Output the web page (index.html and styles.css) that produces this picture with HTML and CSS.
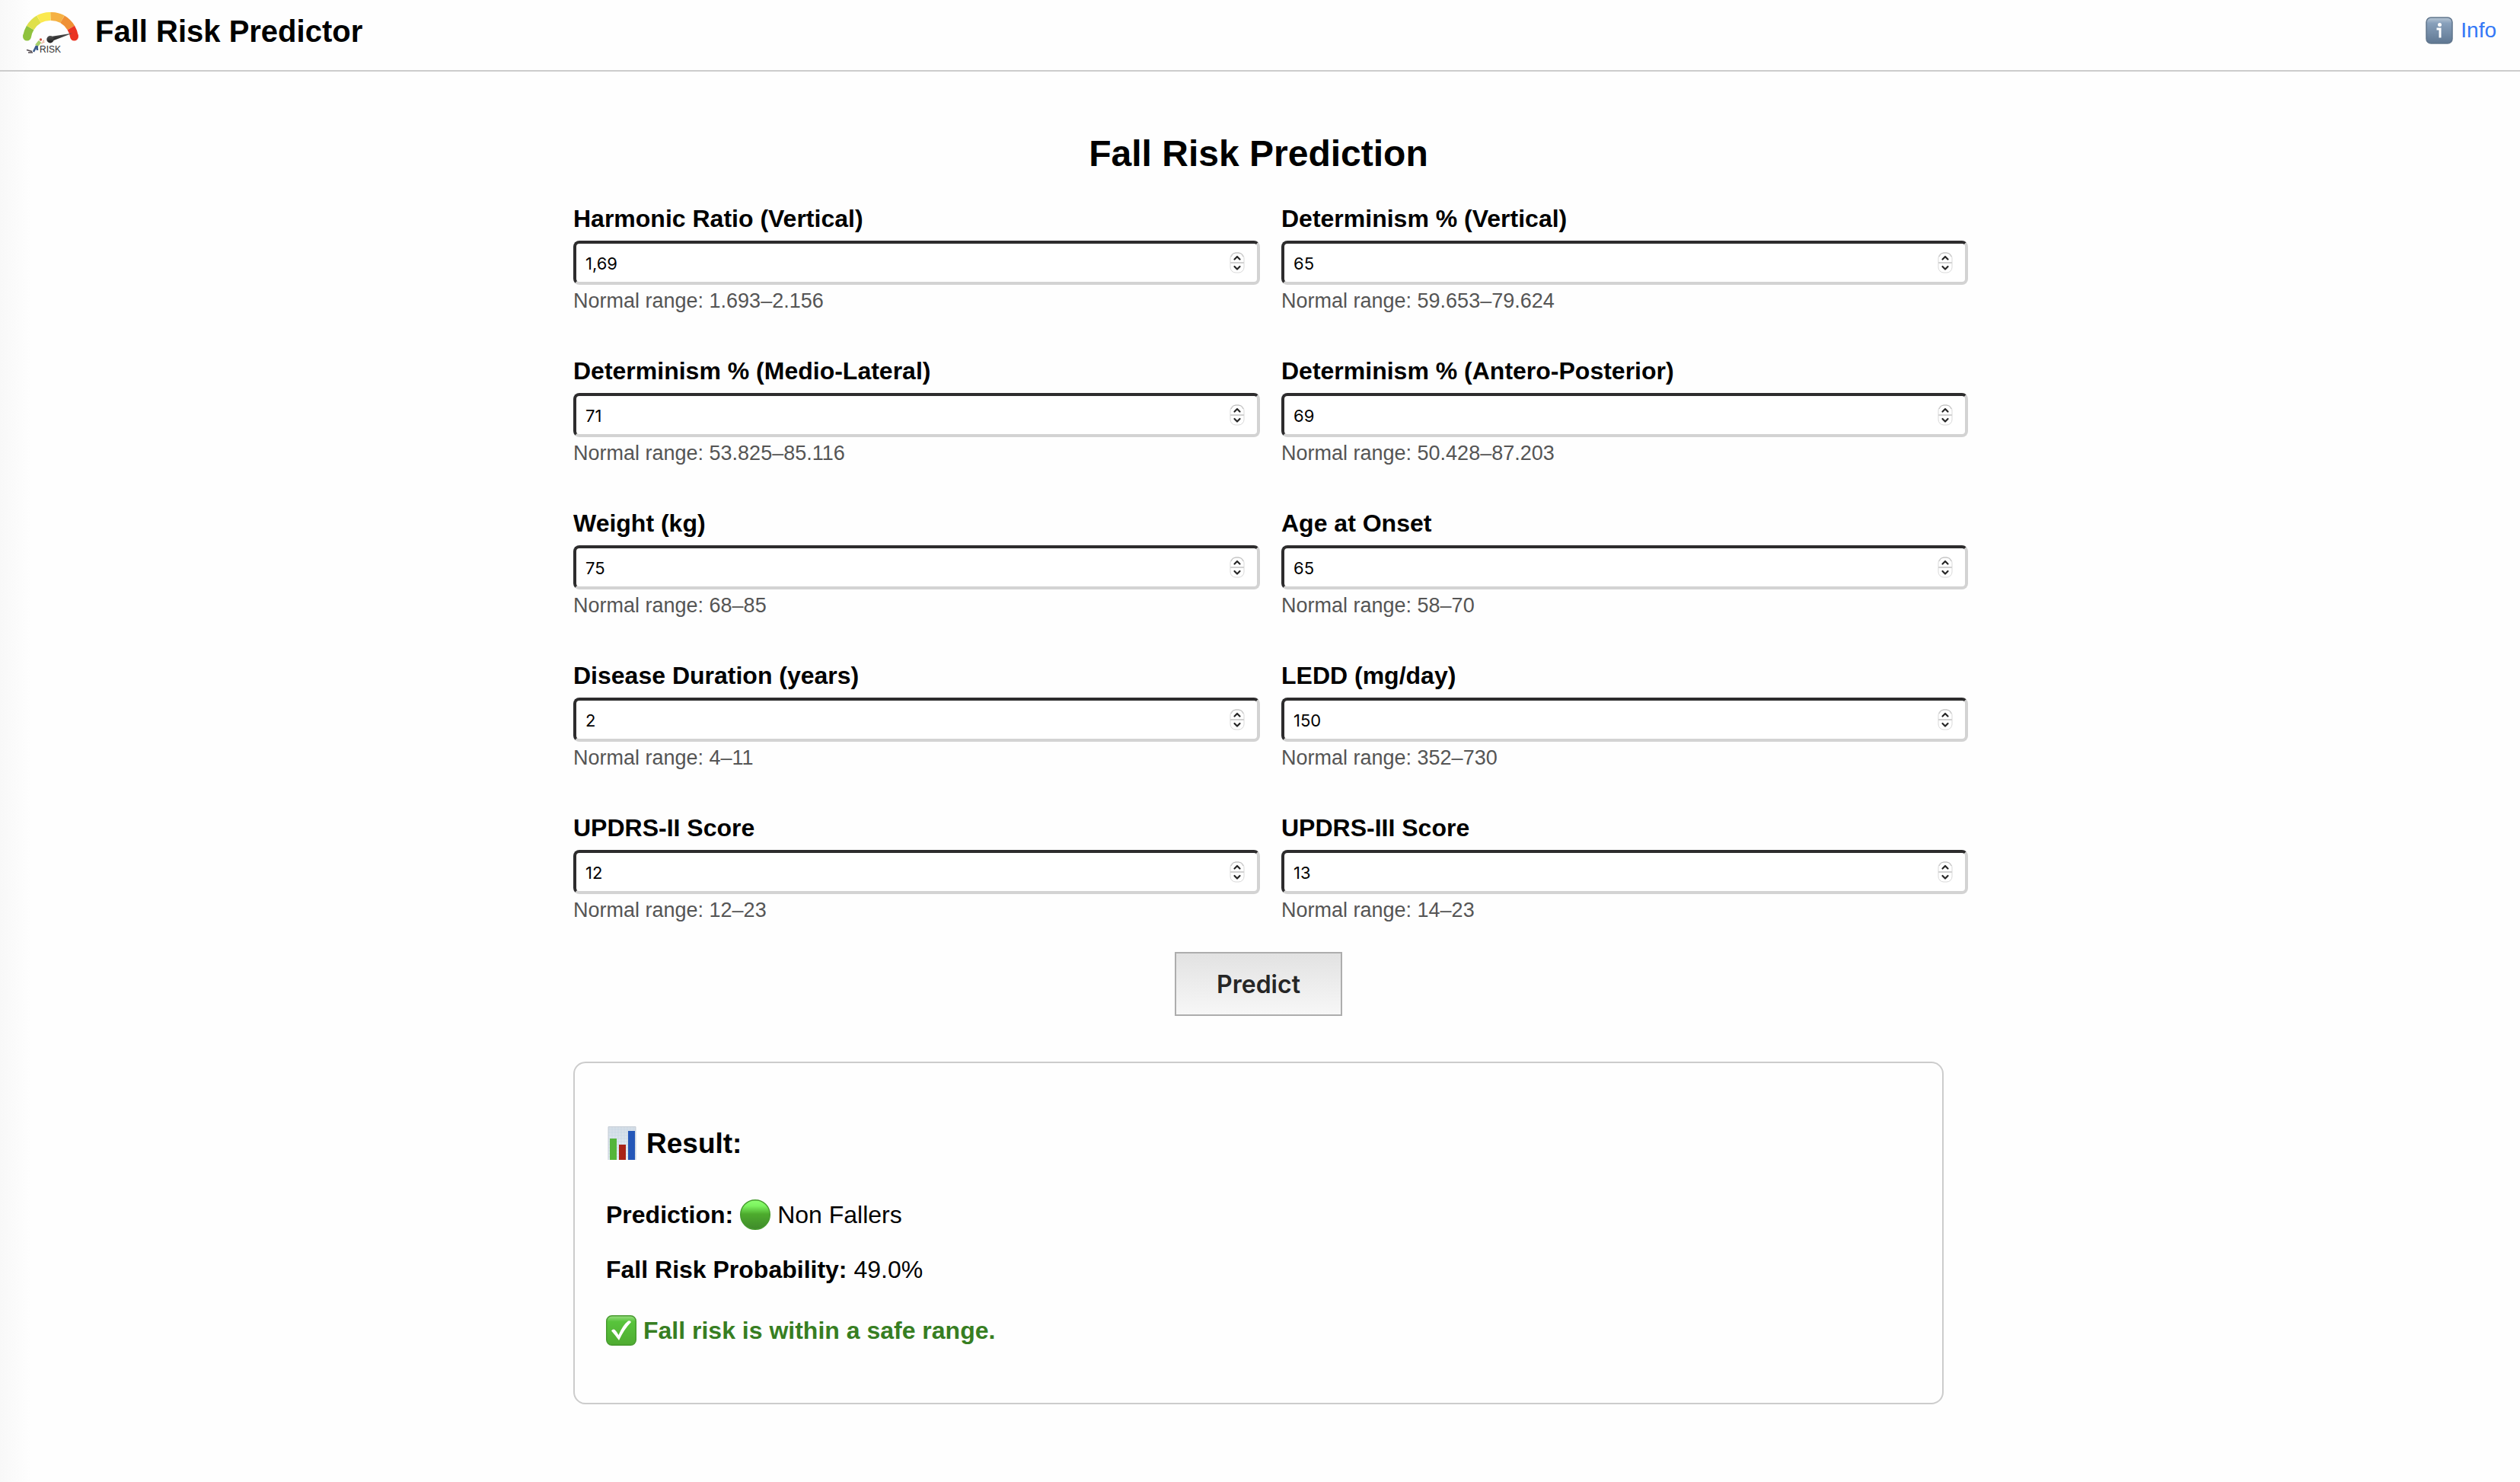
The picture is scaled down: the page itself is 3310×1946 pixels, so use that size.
FILE: index.html
```html
<!DOCTYPE html>
<html lang="en">
<head>
<meta charset="utf-8">
<meta name="viewport" content="width=device-width, initial-scale=1">
<title>Fall Risk Predictor</title>
<link rel="stylesheet" href="styles.css">
</head>
<body>
<svg class="defs" width="0" height="0" aria-hidden="true">
  <defs>
    <linearGradient id="needle" x1="0" y1="0" x2="0" y2="1"><stop offset="0" stop-color="#555"/><stop offset="1" stop-color="#1c1c1c"/></linearGradient>
    <linearGradient id="steel" x1="0" y1="0" x2="0" y2="1"><stop offset="0" stop-color="#b9c8d6"/><stop offset=".22" stop-color="#88a0bb"/><stop offset="1" stop-color="#5f7792"/></linearGradient>
    <linearGradient id="paper" x1="0" y1="0" x2="0" y2="1"><stop offset="0" stop-color="#d5dde6"/><stop offset="1" stop-color="#e9f1f9"/></linearGradient>
    <linearGradient id="ball" x1="0" y1="0" x2="0" y2="1"><stop offset="0" stop-color="#8dff70"/><stop offset=".2" stop-color="#7cf35f"/><stop offset=".48" stop-color="#4dab2d"/><stop offset="1" stop-color="#3f8a2b"/></linearGradient>
    <linearGradient id="tick" x1="0" y1="0" x2="0" y2="1"><stop offset="0" stop-color="#9ade82"/><stop offset=".2" stop-color="#58c43c"/><stop offset="1" stop-color="#4fab31"/></linearGradient>
    <symbol id="spin" viewBox="0 0 20 28">
      <rect x="1" y="1" width="18" height="26" rx="7" fill="#fff" stroke="#d9d9d9" stroke-width="1"/>
      <path d="M2 6Q4 1 8 1H12Q16 1 18 6" fill="none" stroke="#bbb"/>
      <path d="M1 14H19" stroke="#d2d2d2" stroke-width="2"/>
      <path d="M6.500 9.500L10 6L13.500 9.500M6.500 19L10 22.500L13.500 19" fill="none" stroke="#262626" stroke-width="2.200" stroke-linecap="round" stroke-linejoin="round"/>
    </symbol>
  </defs>
</svg>

<header class="topbar">
  <div class="brand">
    <svg class="brand-logo" viewBox="0 0 76 56" aria-hidden="true">
      <g fill="none" stroke-width="11">
        <path d="M6.500 32A31 31 0 0 1 10.700 20.500" stroke="#8fc23e"/>
        <path d="M10.700 20.500A31 31 0 0 1 22 9.200" stroke="#dfe04a"/>
        <path d="M22 9.200A31 31 0 0 1 37.500 5.500" stroke="#fbe94e"/>
        <path d="M37.500 5.500A31 31 0 0 1 53 9.200" stroke="#f5b143"/>
        <path d="M53 9.200A31 31 0 0 1 64.300 20.500" stroke="#ef9035"/>
        <path d="M64.300 20.500A31 31 0 0 1 68.500 32" stroke="#ea3423"/>
      </g>
      <circle cx="6.500" cy="32" r="5.500" fill="#8fc23e"/>
      <circle cx="68.500" cy="32" r="5.500" fill="#ea3423"/>
      <path d="M66.500 27.500L38 32L39 38Z" fill="url(#needle)"/>
      <circle cx="37" cy="35.800" r="4.700" fill="url(#needle)"/>
      <path d="M23.500 38.500L19 44" stroke="#a5cf6a" stroke-width="4.500"/>
      <path d="M25 41L29.500 39M27 38.500L29 37" stroke="#eaa78e" stroke-width="1.300"/>
      <circle cx="24.500" cy="36" r="1.700" fill="#c65340"/>
      <path d="M19 44L15 52M19.500 44L20 50" fill="none" stroke="#3d5c8c" stroke-width="2.600"/>
      <path d="M6 49.500L13 51.500M8 53H14" fill="none" stroke="#544b50" stroke-width="1.500"/>
      <text class="brand-caption" x="23" y="53">RISK</text>
    </svg>
    <span class="brand-name">Fall Risk Predictor</span>
  </div>
  <a class="info-link" href="#info">
    <svg class="info-icon" viewBox="0 0 36 36" aria-hidden="true">
      <rect x="1" y="1" width="34" height="34" rx="6" fill="url(#steel)" stroke="#60758c" stroke-width="1.500"/>
      <circle cx="18.500" cy="10.500" r="2.500" fill="#fff"/>
      <path d="M14.500 16H19V27.500" fill="none" stroke="#fff" stroke-width="3"/>
    </svg>
    Info
  </a>
</header>

<main class="page">
  <h1 class="title">Fall Risk Prediction</h1>
  <form class="form">
    <div class="fields">
      <div class="field">
        <label for="hr-v">Harmonic Ratio (Vertical)</label>
        <div class="box"><input id="hr-v" type="text" inputmode="decimal" value="1,69"><svg class="spin"><use href="#spin"/></svg></div>
        <small>Normal range: 1.693–2.156</small>
      </div>
      <div class="field">
        <label for="det-v">Determinism % (Vertical)</label>
        <div class="box"><input id="det-v" type="number" value="65"><svg class="spin"><use href="#spin"/></svg></div>
        <small>Normal range: 59.653–79.624</small>
      </div>
      <div class="field">
        <label for="det-ml">Determinism % (Medio-Lateral)</label>
        <div class="box"><input id="det-ml" type="number" value="71"><svg class="spin"><use href="#spin"/></svg></div>
        <small>Normal range: 53.825–85.116</small>
      </div>
      <div class="field">
        <label for="det-ap">Determinism % (Antero-Posterior)</label>
        <div class="box"><input id="det-ap" type="number" value="69"><svg class="spin"><use href="#spin"/></svg></div>
        <small>Normal range: 50.428–87.203</small>
      </div>
      <div class="field">
        <label for="weight">Weight (kg)</label>
        <div class="box"><input id="weight" type="number" value="75"><svg class="spin"><use href="#spin"/></svg></div>
        <small>Normal range: 68–85</small>
      </div>
      <div class="field">
        <label for="onset">Age at Onset</label>
        <div class="box"><input id="onset" type="number" value="65"><svg class="spin"><use href="#spin"/></svg></div>
        <small>Normal range: 58–70</small>
      </div>
      <div class="field">
        <label for="duration">Disease Duration (years)</label>
        <div class="box"><input id="duration" type="number" value="2"><svg class="spin"><use href="#spin"/></svg></div>
        <small>Normal range: 4–11</small>
      </div>
      <div class="field">
        <label for="ledd">LEDD (mg/day)</label>
        <div class="box"><input id="ledd" type="number" value="150"><svg class="spin"><use href="#spin"/></svg></div>
        <small>Normal range: 352–730</small>
      </div>
      <div class="field">
        <label for="updrs2">UPDRS-II Score</label>
        <div class="box"><input id="updrs2" type="number" value="12"><svg class="spin"><use href="#spin"/></svg></div>
        <small>Normal range: 12–23</small>
      </div>
      <div class="field">
        <label for="updrs3">UPDRS-III Score</label>
        <div class="box"><input id="updrs3" type="number" value="13"><svg class="spin"><use href="#spin"/></svg></div>
        <small>Normal range: 14–23</small>
      </div>
    </div>
    <button class="predict" type="button">Predict</button>
  </form>

  <section class="result">
    <h2 class="result-title">
      <svg class="emoji" viewBox="0 0 40 44" aria-hidden="true">
        <rect x="3" y="0" width="36" height="44" fill="url(#paper)"/>
        <path d="M3 4H39M3 8H39M3 12H39M3 16H39M3 20H39M3 24H39M3 28H39M3 32H39M3 36H39M3 40H39M8 0V44M12 0V44M16 0V44M20 0V44M24 0V44M28 0V44M32 0V44M36 0V44" stroke="#c8d6e4" stroke-width=".6"/>
        <path d="M3 44V.5H39V44" fill="none" stroke="#c4ccd5"/>
        <rect x="5" y="16" width="9" height="28" fill="#55b53a"/>
        <rect x="17" y="24" width="9" height="20" fill="#a92318"/>
        <rect x="29" y="6" width="9" height="38" fill="#2557b8"/>
      </svg>
      Result:
    </h2>
    <p class="line">
      <strong>Prediction:</strong>
      <svg class="emoji" viewBox="0 0 40 40" aria-hidden="true"><circle cx="20" cy="20" r="19.300" fill="url(#ball)" stroke="#459b2d" stroke-width="1.400"/></svg>
      <span>Non Fallers</span>
    </p>
    <p class="line line-probability"><strong>Fall Risk Probability:</strong> <span>49.0%</span></p>
    <p class="line line-safe">
      <svg class="emoji" viewBox="0 0 40 40" aria-hidden="true"><rect x=".7" y=".7" width="38.600" height="38.600" rx="7" fill="url(#tick)" stroke="#46992e" stroke-width="1.400"/><path d="M7 20.500Q9 17.500 11.500 19Q14.500 22 16.500 26Q22 13 29 7.500Q32 6.500 33 9Q24 18 17 33Q12 26 7 20.500Z" fill="#fff"/></svg>
      <strong>Fall risk is within a safe range.</strong>
    </p>
  </section>
</main>
</body>
</html>
```
FILE: styles.css
```css
* { box-sizing: border-box; }

body {
  margin: 0;
  min-height: 100vh;
  background: linear-gradient(to right, #f8f8f8, #fefefe 40px);
  color: #000;
  font-family: "Liberation Sans", Arial, sans-serif;
  font-size: 32px;
  line-height: 36px;
}

.defs { position: absolute; }

.topbar {
  display: flex;
  justify-content: space-between;
  align-items: flex-start;
  height: 94px;
  padding: 16px 31px 0 29px;
  border-bottom: 2px solid #ccc;
}

.brand {
  display: flex;
  gap: 20px;
}

.brand-logo {
  width: 76px;
  height: 56px;
}

.brand-caption {
  fill: #333;
  font-size: 12px;
}

.brand-name {
  font-size: 40px;
  font-weight: bold;
  line-height: 50px;
}

.info-link {
  display: flex;
  align-items: center;
  gap: 10px;
  padding-top: 6px;
  color: #3478f6;
  font-size: 28px;
  text-decoration: none;
}

.info-icon {
  width: 36px;
  height: 36px;
}

.page {
  width: 100%;
  max-width: 1804px;
  margin: 0 auto;
  padding: 81px 4px 100px 0;
}

.title {
  margin: 0 0 40px;
  font-size: 48px;
  line-height: 54px;
  text-align: center;
}

.fields {
  display: grid;
  grid-template-columns: 1fr 1fr;
  gap: 59px 28px;
  margin-right: -32px;
}

.field {
  display: flex;
  flex-direction: column;
}

.field label {
  margin-bottom: 11px;
  font-weight: bold;
}

.field small {
  margin-top: 6px;
  color: #555;
  font-size: 27px;
  line-height: 30px;
}

.box {
  display: flex;
  align-items: center;
  height: 58px;
  padding: 0 16px 0 12px;
  border: 4px solid;
  border-color: #2d2c2d #d3d3d3 #d3d3d3 #2d2c2d;
  border-radius: 8px;
  background: #fff;
}

.box input {
  flex: 1;
  min-width: 0;
  padding: 2px 0 0;
  border: 0;
  background: none;
  color: #000;
  font-family: Inter, sans-serif;
  font-size: 22px;
  appearance: textfield;
}

.spin {
  width: 20px;
  height: 28px;
}

.predict {
  display: block;
  width: 220px;
  height: 84px;
  margin: 40px auto 0;
  border: 2px solid #adadad;
  background: linear-gradient(#e2e2e2, #f7f7f7);
  color: #262626;
  font-family: Inter, sans-serif;
  font-size: 32px;
  font-weight: 600;
}

.result {
  margin-top: 60px;
  padding: 83px 41px 75px;
  border: 2px solid #ccc;
  border-radius: 16px;
}

.result-title {
  display: flex;
  align-items: center;
  gap: 13px;
  margin: 0 0 52px;
  font-size: 37px;
  line-height: 43px;
}

.emoji {
  width: 40px;
  height: 40px;
}

.result-title .emoji { height: 44px; }

.line {
  display: flex;
  align-items: center;
  gap: 9px;
  margin: 0;
}

.line-probability { margin: 34px 0 42px; }

.line-safe { color: #377e22; }
```
